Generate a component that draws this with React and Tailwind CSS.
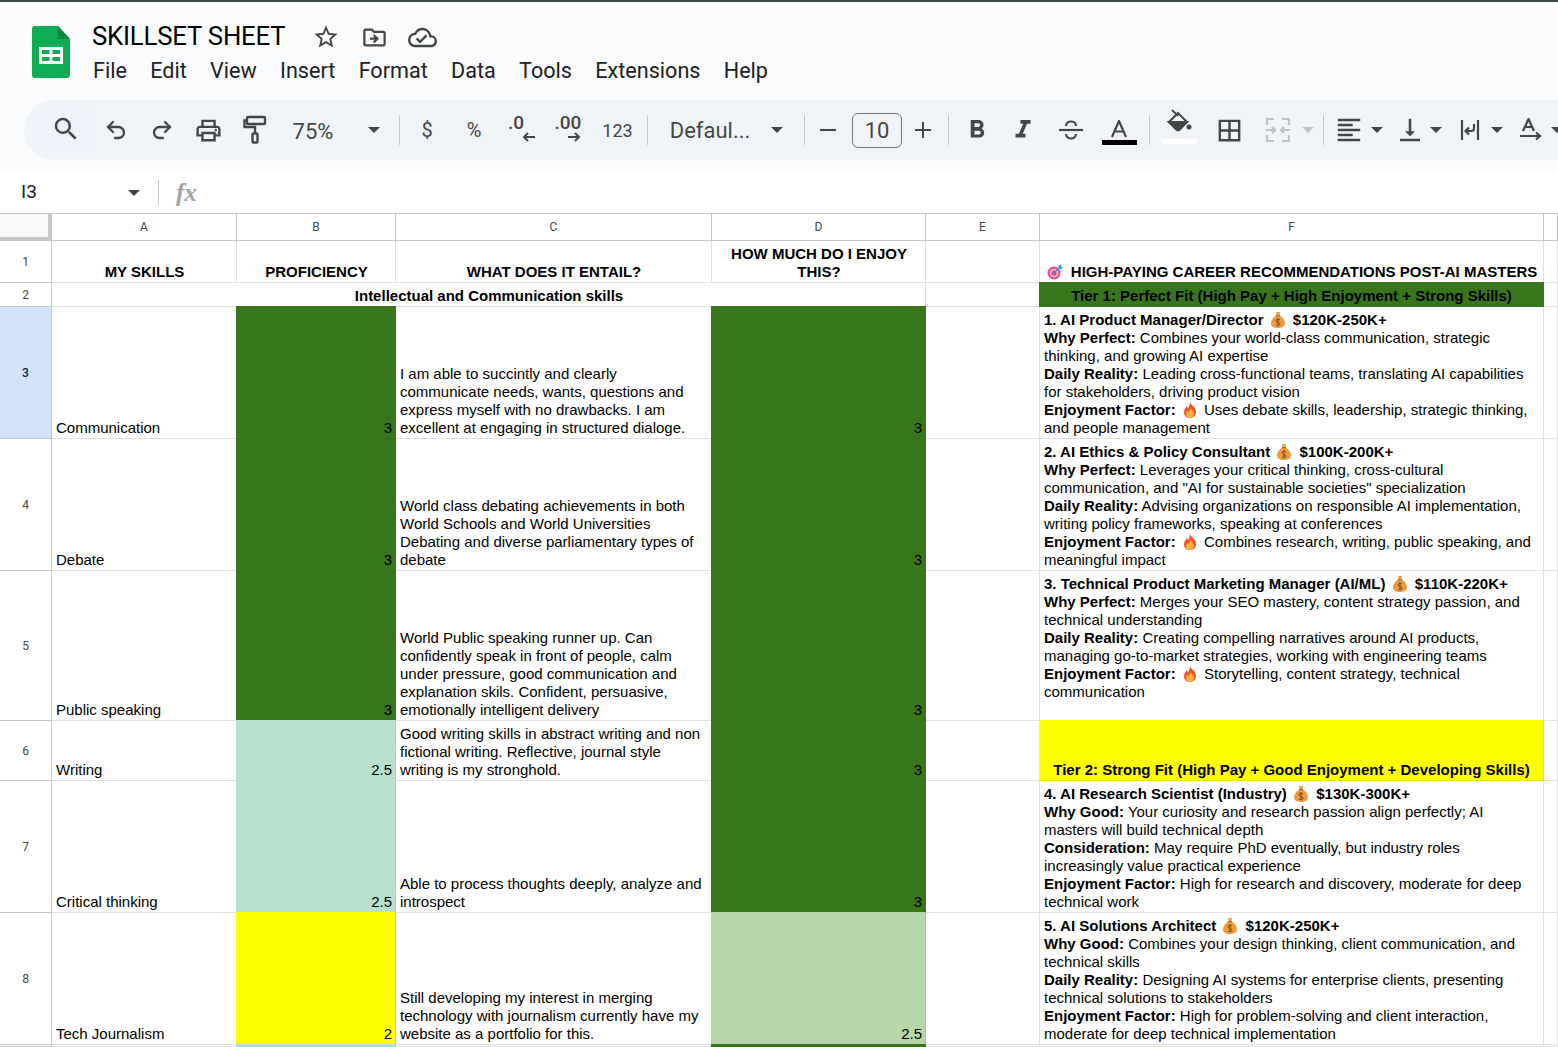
import { Undo2, Redo2 } from "lucide-react";
import {
  MdOutlineStarBorder,
  MdOutlineDriveFileMove,
  MdOutlineCloudDone,
  MdSearch,
  MdOutlinePrint,
  MdFormatBold,
  MdFormatItalic,
  MdBorderAll,
  MdFormatAlignLeft,
  MdVerticalAlignBottom,
} from "react-icons/md";

const MENU = ["File", "Edit", "View", "Insert", "Format", "Data", "Tools", "Extensions", "Help"];

function Caret({ light }) {
  return (
    <div
      className={`w-0 h-0 border-x-[6px] border-t-[6px] border-x-transparent ${
        light ? "border-t-[#c0c2c4]" : "border-t-[#444746]"
      }`}
    />
  );
}

function Slot({ className = "", children }) {
  return <div className={`flex items-center justify-center h-full shrink-0 ${className}`}>{children}</div>;
}

function Sep() {
  return <div className="w-px h-[30px] bg-[#c7c7c7] shrink-0" />;
}

function SheetsLogo() {
  return (
    <svg width="38" height="52" viewBox="0 0 38 52">
      <path d="M3 0h23l12 13v36a3 3 0 0 1-3 3H3a3 3 0 0 1-3-3V3a3 3 0 0 1 3-3z" fill="#0ead53" />
      <path d="M26 0l12 13H26z" fill="#0a8a3e" />
      <path d="M7 21h24v17H7zm3 3v4h7.500v-4zm10.500 0v4H28v-4zM10 31v4h7.500v-4zm10.500 0v4H28v-4z" fill="#fff" fillRule="evenodd" />
    </svg>
  );
}

function PaintRoller() {
  return (
    <svg width="24" height="30" viewBox="0 0 24 30" fill="none" stroke="#444746" strokeWidth="2.400">
      <rect x="4" y="2" width="18" height="7" rx="1" />
      <path d="M4 5.500H1.500v6.500H12v6" />
      <rect x="9.500" y="18.500" width="5" height="9" rx="1" />
    </svg>
  );
}

function Strike() {
  return (
    <svg width="26" height="26" viewBox="0 0 26 26" fill="none" stroke="#444746" strokeWidth="2.200">
      <path d="M1 13h24" />
      <path d="M8 9c0-6 10-6 10 0M8 17c0 6 10 6 10 0" />
    </svg>
  );
}

function TextColorA() {
  return (
    <svg width="18" height="18" viewBox="0 0 18 18" fill="none" stroke="#444746" strokeWidth="2.200">
      <path d="M2 17L9 1l7 16M4.500 11.500h9" />
    </svg>
  );
}

function FillBucket() {
  return (
    <svg width="25" height="23" viewBox="0 0 25 23" fill="none" stroke="#444746" strokeWidth="2">
      <path d="M5 1l6 6" />
      <path d="M2 13l9-9 9 9-7.500 7.500a2 2 0 0 1-3 0z" />
      <path d="M2 13h18l-7.500 7.500a2 2 0 0 1-3 0z" fill="#444746" />
      <circle cx="22" cy="18" r="2.500" fill="#444746" stroke="none" />
    </svg>
  );
}

function DecArrow({ left }) {
  return (
    <svg width="13" height="10" viewBox="0 0 13 10" fill="none" stroke="#444746" strokeWidth="2">
      {left ? <path d="M13 5H2M6 1L2 5l4 4" /> : <path d="M0 5h11M7 1l4 4-4 4" />}
    </svg>
  );
}

function MergeIcon() {
  return (
    <svg width="24" height="24" viewBox="0 0 24 24" fill="none" stroke="#c0c2c4" strokeWidth="2.200">
      <path d="M8 1H1v6M8 23H1v-6M16 1h7v6M16 23h7v-6M0 12h9M6 9l3 3-3 3M24 12h-9M18 9l-3 3 3 3" />
    </svg>
  );
}

function WrapIcon() {
  return (
    <svg width="20" height="20" viewBox="0 0 20 20" fill="none" stroke="#444746" strokeWidth="2.200">
      <path d="M2 0v20M18 0v20" />
      <path d="M14 4v4.500a2.500 2.500 0 0 1-2.500 2.500H6M9 7.500L5.500 11 9 14.500" />
    </svg>
  );
}

function RotateIcon() {
  return (
    <svg width="22" height="24" viewBox="0 0 22 24" fill="none" stroke="#444746" strokeWidth="2.200">
      <path d="M3 13L8.500 1l5.500 12M5 9h7M0 18h19M16 14.500l4 3.500-4 3.500" />
    </svg>
  );
}

function Target() {
  return (
    <svg width="16" height="16" viewBox="0 0 16 16" className="inline-block align-[-3px] mr-[4px]">
      <circle cx="7" cy="9" r="6.500" fill="#e8518f" />
      <circle cx="7" cy="9" r="4.300" fill="#f7c3d8" />
      <circle cx="7" cy="9" r="2.600" fill="#e0457f" />
      <path d="M7 9l6-6" stroke="#2f8fd8" strokeWidth="1.500" />
      <path d="M11 2l3-1.500.500 2L16 3.500 13 6z" fill="#39a0e6" />
    </svg>
  );
}

function MoneyBag() {
  return (
    <svg width="14" height="16" viewBox="0 0 14 16" className="inline-block align-[-3px] ml-[3px] mr-[4px]">
      <path d="M5 0h4L8.500 3h-3z" fill="#e8a33b" />
      <path d="M5 3.500h4c3 2 5 5 5 8 0 3-3 4.500-7 4.500S0 14.500 0 11.500c0-3 2-6 5-8z" fill="#f09a3e" />
      <path d="M5 3h4v1.200H5z" fill="#a8662a" />
      <path d="M7 6v8M9 8c-1-1-4-1-4 .800S9 10.500 9 12.200 6 14 5 13" fill="none" stroke="#7a4a1e" strokeWidth="1" />
    </svg>
  );
}

function Fire() {
  return (
    <svg width="14" height="16" viewBox="0 0 14 16" className="inline-block align-[-3px] ml-[3px] mr-[3px]">
      <path d="M7 0c1 3 6 5 6 10 0 4-3 6-6 6s-6-2-6-6c0-3 2-4 2.500-6C4.500 5 5 6 5.500 6 6.500 4 6.500 2 7 0z" fill="#f4552a" />
      <path d="M7.500 6c.500 2 3.500 3.500 3.500 6 0 2.500-2 4-4 4s-4-1.500-4-4c0-1.500 1-2.500 2-3.500C5.500 9.500 6 9.500 6.500 9 7 8 7.300 7 7.500 6z" fill="#fbb03b" />
    </svg>
  );
}

// fill is the coloured variant; those cells cover the neighbouring gridline like Sheets does
function Cell({ className = "", fill = "border-[#e1e1e1]", children }) {
  return (
    <div className={`flex items-end min-w-0 border-r border-b pl-1 pr-[3px] pb-px whitespace-nowrap ${fill} ${className}`}>
      <div className="w-full">{children}</div>
    </div>
  );
}

function RowHead({ n, active }) {
  return (
    <div
      className={`flex items-center justify-center border-r border-b border-[#c7c7c7] text-[12px] font-['Roboto',sans-serif] ${
        active ? "bg-[#d3e3fd] text-[#041e49] font-medium" : "bg-white text-[#444746]"
      }`}
    >
      {n}
    </div>
  );
}

function ColHead({ children }) {
  return (
    <div className="flex items-center justify-center border-r border-b border-[#c7c7c7] text-[12px] text-[#444746] font-['Roboto',sans-serif]">
      {children}
    </div>
  );
}

function Lines({ lines }) {
  return lines.map((l, i) => <div key={i}>{l}</div>);
}

const GREEN = "bg-[#38761d] border-[#38761d] -ml-px -mt-px";
const TEAL = "bg-[#b7e1cd] border-[#a9d3bf] -ml-px -mt-px";
const SAGE = "bg-[#b6d7a8] border-[#a5c697] -ml-px -mt-px";
const YELLOW = "bg-[#ffff00] border-[#e6e600] -ml-px -mt-px";

function Num({ fill, children }) {
  return <Cell className="text-right" fill={fill}>{children}</Cell>;
}

function Plain({ lines }) {
  return (
    <Cell>
      <Lines lines={lines} />
    </Cell>
  );
}

function Career({ title, pay, rows }) {
  return (
    <Cell>
      <div className="font-bold">
        {title} <MoneyBag /> {pay}
      </div>
      {rows.map((r, i) => (
        <div key={i}>{r}</div>
      ))}
    </Cell>
  );
}

export default function App() {
  return (
    <div className="w-[1558px] h-[1047px] overflow-hidden bg-white text-black flex flex-col">
      <div className="h-[2px] bg-[#3c4a3e] shrink-0" />

      {/* Header */}
      <div className="h-[170px] shrink-0 bg-[#f9fbfd] flex flex-col">
        <div className="flex h-[98px] pl-[32px] pt-[24px]">
          <SheetsLogo />
          <div className="ml-[22px] -mt-[8px]">
            <div className="flex items-center h-[36px]">
              <span className="text-[25.750px] tracking-[-0.2px] font-['Roboto',sans-serif] font-normal">SKILLSET SHEET</span>
              <MdOutlineStarBorder className="ml-[27px] mt-[2px] text-[#444746]" size={28} />
              <MdOutlineDriveFileMove className="ml-[21px] mt-[2px] text-[#444746]" size={27} />
              <MdOutlineCloudDone className="ml-[20px] mt-[2px] text-[#444746]" size={29} />
            </div>
            <div className="flex gap-[23.300px] mt-[2px] ml-[1px] text-[21.600px] leading-[30px] text-[#202124] font-['Roboto',sans-serif]">
              {MENU.map((m) => (
                <span key={m}>{m}</span>
              ))}
            </div>
          </div>
        </div>

        {/* Toolbar */}
        <div className="ml-[24px] h-[60px] w-[1600px] rounded-[30px] bg-[#f0f4f9] flex items-center pl-[14px] text-[#444746] font-['Roboto',sans-serif]">
          <Slot className="w-[55px] !h-[42px] bg-[#eef3fb]"><MdSearch size={30} className="-mt-[3px]" /></Slot>
          <Slot className="w-[45px]"><Undo2 size={24} strokeWidth={2.300} /></Slot>
          <Slot className="w-[47px]"><Redo2 size={24} strokeWidth={2.300} /></Slot>
          <Slot className="w-[47px]"><MdOutlinePrint size={29} /></Slot>
          <Slot className="w-[46px]"><PaintRoller /></Slot>
          <Slot className="w-[70px] text-[22px] pt-[2px]">75%</Slot>
          <Slot className="w-[51px]"><Caret /></Slot>
          <Sep />
          <Slot className="w-[54px] text-[20px]">$</Slot>
          <Slot className="w-[40px] text-[20px]">%</Slot>
          <Slot className="w-[54px] flex-col">
            <span className="text-[19px] leading-[20px] font-medium -mt-[5px] mr-[10px]">.0</span>
            <span className="flex ml-[14px] -mt-[1px]"><DecArrow left /></span>
          </Slot>
          <Slot className="w-[40px] flex-col">
            <span className="text-[19px] leading-[20px] font-medium -mt-[5px]">.00</span>
            <span className="flex ml-[12px] -mt-[1px]"><DecArrow /></span>
          </Slot>
          <Slot className="w-[59px] text-[18px]">123</Slot>
          <Sep />
          <Slot className="w-[122px] ml-[1px] text-[22px]">Defaul...</Slot>
          <Slot className="w-[12px]"><Caret /></Slot>
          <div className="w-[21px] shrink-0" />
          <Sep />
          <Slot className="w-[46px]"><div className="w-[16px] h-[2.500px] bg-[#444746]" /></Slot>
          <div className="shrink-0 w-[50px] h-[35px] ml-[1px] rounded-md border border-[#747775] flex items-center justify-center text-[22px]">10</div>
          <Slot className="w-[46px] relative pr-[4px]">
            <div className="w-[16px] h-[2.500px] bg-[#444746]" />
            <div className="absolute w-[2.500px] h-[16px] bg-[#444746]" />
          </Slot>
          <Sep />
          <Slot className="w-[56px]"><MdFormatBold size={30} /></Slot>
          <Slot className="w-[36px]"><MdFormatItalic size={30} /></Slot>
          <Slot className="w-[60px]"><Strike /></Slot>
          <Slot className="w-[36px] flex-col">
            <TextColorA />
            <div className="w-[35px] h-[5px] bg-black mt-[2px] -mb-[5px]" />
          </Slot>
          <div className="w-[12px] shrink-0" />
          <Sep />
          <Slot className="w-[58px] flex-col">
            <span className="flex -mt-[12px]"><FillBucket /></span>
            <div className="w-[35px] h-[5px] bg-white mt-[7px] -mb-[5px]" />
          </Slot>
          <Slot className="w-[42px] mr-[2px]"><MdBorderAll size={29} /></Slot>
          <Slot className="w-[52px]"><MergeIcon /></Slot>
          <Slot className="w-[12px] -ml-[2px]"><Caret light /></Slot>
          <div className="w-[9px] shrink-0" />
          <Sep />
          <Slot className="w-[50px]"><MdFormatAlignLeft size={30} /></Slot>
          <Slot className="w-[12px] -ml-[3px]"><Caret /></Slot>
          <Slot className="w-[40px] ml-[7px]"><MdVerticalAlignBottom size={30} /></Slot>
          <Slot className="w-[12px]"><Caret /></Slot>
          <Slot className="w-[40px] ml-[8px]"><WrapIcon /></Slot>
          <Slot className="w-[12px] ml-[1px]"><Caret /></Slot>
          <Slot className="w-[40px] ml-[8px]"><RotateIcon /></Slot>
          <Slot className="w-[12px]"><Caret /></Slot>
        </div>
      </div>

      {/* Formula bar */}
      <div className="h-[42px] shrink-0 bg-white flex items-center border-b border-[#c7c7c7] font-['Roboto',sans-serif]">
        <span className="ml-[21px] w-[107px] text-[19px] text-[#202124]">I3</span>
        <Caret />
        <div className="ml-[18px] w-px h-[25px] bg-[#c7c7c7]" />
        <span className="ml-[17px] text-[25px] font-bold italic text-[#a3a3a3] font-['Liberation_Serif',serif]">fx</span>
      </div>

      {/* Grid */}
      <div className="flex-1 grid grid-cols-[52px_185px_159px_316px_214px_114px_504px_1fr] grid-rows-[27px_42px_24px_132px_132px_150px_60px_132px_132px_1fr] text-[15px] leading-[18px] font-['Liberation_Sans',Arial,sans-serif]">
        <div className="bg-[#f8f9fa] border-r-[4px] border-b-[4px] border-[#c7c7c7]" />
        <ColHead>A</ColHead>
        <ColHead>B</ColHead>
        <ColHead>C</ColHead>
        <ColHead>D</ColHead>
        <ColHead>E</ColHead>
        <ColHead>F</ColHead>
        <ColHead />

        <RowHead n="1" />
        <Cell className="text-center font-bold">MY SKILLS</Cell>
        <Cell className="text-center font-bold">PROFICIENCY</Cell>
        <Cell className="text-center font-bold">WHAT DOES IT ENTAIL?</Cell>
        <Cell className="text-center font-bold">
          <Lines lines={["HOW MUCH DO I ENJOY", "THIS?"]} />
        </Cell>
        <Cell />
        <Cell className="text-center font-bold">
          <Target /> HIGH-PAYING CAREER RECOMMENDATIONS POST-AI MASTERS
        </Cell>
        <Cell />

        <RowHead n="2" />
        <Cell className="col-span-4 text-center font-bold">Intellectual and Communication skills</Cell>
        <Cell />
        <Cell className="text-center font-bold" fill={GREEN}>Tier 1: Perfect Fit (High Pay + High Enjoyment + Strong Skills)</Cell>
        <Cell />

        <RowHead n="3" active />
        <Cell>Communication</Cell>
        <Num fill={GREEN}>3</Num>
        <Plain
          lines={[
            "I am able to succintly and clearly",
            "communicate needs, wants, questions and",
            "express myself with no drawbacks. I am",
            "excellent at engaging in structured dialoge.",
          ]}
        />
        <Num fill={GREEN}>3</Num>
        <Cell />
        <Career
          title="1. AI Product Manager/Director"
          pay="$120K-250K+"
          rows={[
            <><b>Why Perfect:</b> Combines your world-class communication, strategic</>,
            "thinking, and growing AI expertise",
            <><b>Daily Reality:</b> Leading cross-functional teams, translating AI capabilities</>,
            "for stakeholders, driving product vision",
            <><b>Enjoyment Factor:</b> <Fire /> Uses debate skills, leadership, strategic thinking,</>,
            "and people management",
          ]}
        />
        <Cell />

        <RowHead n="4" />
        <Cell>Debate</Cell>
        <Num fill={GREEN}>3</Num>
        <Plain
          lines={[
            "World class debating achievements in both",
            "World Schools and World Universities",
            "Debating and diverse parliamentary types of",
            "debate",
          ]}
        />
        <Num fill={GREEN}>3</Num>
        <Cell />
        <Career
          title="2. AI Ethics & Policy Consultant"
          pay="$100K-200K+"
          rows={[
            <><b>Why Perfect:</b> Leverages your critical thinking, cross-cultural</>,
            'communication, and "AI for sustainable societies" specialization',
            <><b>Daily Reality:</b> Advising organizations on responsible AI implementation,</>,
            "writing policy frameworks, speaking at conferences",
            <><b>Enjoyment Factor:</b> <Fire /> Combines research, writing, public speaking, and</>,
            "meaningful impact",
          ]}
        />
        <Cell />

        <RowHead n="5" />
        <Cell>Public speaking</Cell>
        <Num fill={GREEN}>3</Num>
        <Plain
          lines={[
            "World Public speaking runner up. Can",
            "confidently speak in front of people, calm",
            "under pressure, good communication and",
            "explanation skils. Confident, persuasive,",
            "emotionally intelligent delivery",
          ]}
        />
        <Num fill={GREEN}>3</Num>
        <Cell />
        <Cell className="!items-start pt-[4px]">
          <div className="font-bold">
            3. Technical Product Marketing Manager (AI/ML) <MoneyBag /> $110K-220K+
          </div>
          <div><b>Why Perfect:</b> Merges your SEO mastery, content strategy passion, and</div>
          <div>technical understanding</div>
          <div><b>Daily Reality:</b> Creating compelling narratives around AI products,</div>
          <div>managing go-to-market strategies, working with engineering teams</div>
          <div><b>Enjoyment Factor:</b> <Fire /> Storytelling, content strategy, technical</div>
          <div>communication</div>
        </Cell>
        <Cell />

        <RowHead n="6" />
        <Cell>Writing</Cell>
        <Num fill={TEAL}>2.5</Num>
        <Plain
          lines={[
            "Good writing skills in abstract writing and non",
            "fictional writing. Reflective, journal style",
            "writing is my stronghold.",
          ]}
        />
        <Num fill={GREEN}>3</Num>
        <Cell />
        <Cell className="text-center font-bold" fill={YELLOW}>Tier 2: Strong Fit (High Pay + Good Enjoyment + Developing Skills)</Cell>
        <Cell />

        <RowHead n="7" />
        <Cell>Critical thinking</Cell>
        <Num fill={TEAL}>2.5</Num>
        <Plain lines={["Able to process thoughts deeply, analyze and", "introspect"]} />
        <Num fill={GREEN}>3</Num>
        <Cell />
        <Career
          title="4. AI Research Scientist (Industry)"
          pay="$130K-300K+"
          rows={[
            <><b>Why Good:</b> Your curiosity and research passion align perfectly; AI</>,
            "masters will build technical depth",
            <><b>Consideration:</b> May require PhD eventually, but industry roles</>,
            "increasingly value practical experience",
            <><b>Enjoyment Factor:</b> High for research and discovery, moderate for deep</>,
            "technical work",
          ]}
        />
        <Cell />

        <RowHead n="8" />
        <Cell>Tech Journalism</Cell>
        <Num fill={YELLOW}>2</Num>
        <Plain
          lines={[
            "Still developing my interest in merging",
            "technology with journalism currently have my",
            "website as a portfolio for this.",
          ]}
        />
        <Num fill={SAGE}>2.5</Num>
        <Cell />
        <Career
          title="5. AI Solutions Architect"
          pay="$120K-250K+"
          rows={[
            <><b>Why Good:</b> Combines your design thinking, client communication, and</>,
            "technical skills",
            <><b>Daily Reality:</b> Designing AI systems for enterprise clients, presenting</>,
            "technical solutions to stakeholders",
            <><b>Enjoyment Factor:</b> High for problem-solving and client interaction,</>,
            "moderate for deep technical implementation",
          ]}
        />
        <Cell />

        <RowHead n="" />
        <Cell />
        <Cell fill={TEAL} />
        <Cell />
        <Cell fill={GREEN} />
        <Cell />
        <Cell />
        <Cell />
      </div>
    </div>
  );
}
